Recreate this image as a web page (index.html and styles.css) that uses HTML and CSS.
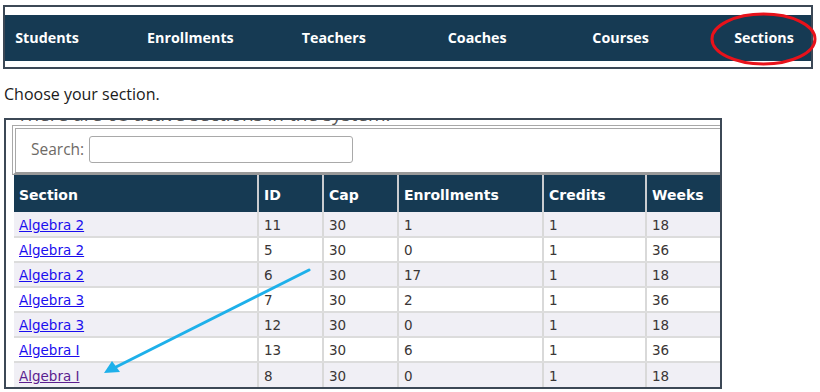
FILE: index.html
```html
<!DOCTYPE html>
<html>
<head>
<meta charset="utf-8">
<link rel="stylesheet" href="styles.css">
</head>
<body>
<div class="page">
  <div class="nav-box">
    <div class="nav">
      <div class="nav-track">
        <span class="nav-item">Students</span>
        <span class="nav-item">Enrollments</span>
        <span class="nav-item">Teachers</span>
        <span class="nav-item">Coaches</span>
        <span class="nav-item">Courses</span>
        <span class="nav-item">Sections</span>
      </div>
    </div>
  </div>

  <p class="intro">Choose your section.</p>

  <div class="frame">
    <div class="cut-title"><div class="cut-text">There are 68 active sections in the system.</div></div>
    <div class="search-wrap">
      <label class="search-label">Search:</label>
      <input class="search-input" type="text">
    </div>
    <table class="grid">
      <colgroup>
        <col class="c-section"><col class="c-id"><col class="c-cap"><col class="c-enr"><col class="c-cred"><col class="c-weeks">
      </colgroup>
      <thead>
        <tr><th>Section</th><th>ID</th><th>Cap</th><th>Enrollments</th><th>Credits</th><th>Weeks</th></tr>
      </thead>
      <tbody>
        <tr class="odd"><td><a href="#">Algebra 2</a></td><td>11</td><td>30</td><td>1</td><td>1</td><td>18</td></tr>
        <tr><td><a href="#">Algebra 2</a></td><td>5</td><td>30</td><td>0</td><td>1</td><td>36</td></tr>
        <tr class="odd"><td><a href="#">Algebra 2</a></td><td>6</td><td>30</td><td>17</td><td>1</td><td>18</td></tr>
        <tr><td><a href="#">Algebra 3</a></td><td>7</td><td>30</td><td>2</td><td>1</td><td>36</td></tr>
        <tr class="odd"><td><a href="#">Algebra 3</a></td><td>12</td><td>30</td><td>0</td><td>1</td><td>18</td></tr>
        <tr><td><a href="#">Algebra I</a></td><td>13</td><td>30</td><td>6</td><td>1</td><td>36</td></tr>
        <tr class="odd"><td><a href="#" class="visited">Algebra I</a></td><td>8</td><td>30</td><td>0</td><td>1</td><td>18</td></tr>
      </tbody>
    </table>
  </div>

  <svg class="annot" width="820" height="392" viewBox="0 0 820 392">
    <ellipse cx="763.5" cy="39" rx="51.5" ry="25" fill="none" stroke="#e8121b" stroke-width="3"/>
    <line x1="309" y1="270" x2="116" y2="367" stroke="#1eb0ea" stroke-width="3" stroke-linecap="round"/>
    <polygon points="104,373 112,361 120,372" fill="#1eb0ea"/>
  </svg>
</div>
</body>
</html>
```

FILE: styles.css
```css
html, body {
  margin: 0;
  padding: 0;
  background: #ffffff;
}

.page {
  position: relative;
  width: 820px;
  height: 392px;
  overflow: hidden;
}

.nav-box {
  margin: 5px 0 0 3px;
  width: 806px;
  border: 2px solid #3c4856;
  padding: 8px 0 6px;
  background: #ffffff;
}

.nav {
  height: 46px;
  background: #163a53;
  overflow: hidden;
}

.nav-track {
  display: grid;
  grid-template-columns: repeat(6, 143.4px);
  margin-left: -29.7px;
  height: 100%;
  align-items: center;
}

.nav-item {
  text-align: center;
  color: #ffffff;
  font-family: "Open Sans", sans-serif;
  font-weight: 700;
  font-size: 14.3px;
  padding-bottom: 2px;
}

.intro {
  margin: 15px 0 0 4px;
  font-family: "Open Sans", sans-serif;
  font-size: 16px;
  line-height: 20px;
  color: #1a1a1a;
}

.frame {
  margin: 14px 0 0 4px;
  width: 714px;
  border: 2px solid #3c4856;
  background: #ffffff;
}

.cut-title {
  display: flow-root;
  height: 5px;
  overflow: hidden;
  padding-left: 11px;
}

.cut-text {
  margin-top: -17px;
  font-family: "Open Sans", sans-serif;
  font-size: 19px;
  line-height: 22px;
  color: #555555;
  white-space: nowrap;
}

.search-wrap {
  margin-left: 6px;
  display: flex;
  align-items: flex-start;
  gap: 5px;
  height: 36px;
  padding: 7px 0 0 15px;
  border-top: 4px double #a8a8a8;
  border-left: 4px double #a8a8a8;
  border-bottom: 3px solid #999999;
  box-sizing: content-box;
}

.search-label {
  font-family: "Open Sans", sans-serif;
  font-size: 15.5px;
  line-height: 27px;
  color: #6e6a66;
}

.search-input {
  width: 262px;
  height: 25px;
  margin: 0;
  padding: 0;
  border: 1px solid #a9a9a9;
  border-radius: 3px;
  background: #ffffff;
  box-sizing: content-box;
}

.grid {
  margin-left: 8px;
  border-collapse: collapse;
  table-layout: fixed;
  width: 706px;
  font-family: "DejaVu Sans", sans-serif;
}

.c-section { width: 244px; }
.c-id { width: 65px; }
.c-cap { width: 75px; }
.c-enr { width: 145px; }
.c-cred { width: 103px; }
.c-weeks { width: 74px; }

.grid th {
  background: #163a53;
  color: #ffffff;
  font-weight: 700;
  font-size: 14px;
  text-align: left;
  height: 37px;
  padding: 3px 0 0 5px;
  border-left: 2px solid #c9ccd0;
  box-sizing: border-box;
}

.grid th:first-child,
.grid td:first-child {
  border-left: none;
}

.grid td {
  height: 25px;
  padding: 1px 0 0 5px;
  font-size: 13.5px;
  color: #3a3636;
  border-left: 2px solid #d9d9d9;
  border-bottom: 2px solid #dcdcdc;
  box-sizing: border-box;
  white-space: nowrap;
}

.grid tbody tr:last-child td {
  border-bottom: none;
}

.grid tr.odd td {
  background: #f0eff5;
}

.grid a {
  color: #1a0dee;
  text-decoration: underline;
}

.grid a.visited {
  color: #5b1d8f;
}

.annot {
  position: absolute;
  left: 0;
  top: 0;
  pointer-events: none;
}
```
